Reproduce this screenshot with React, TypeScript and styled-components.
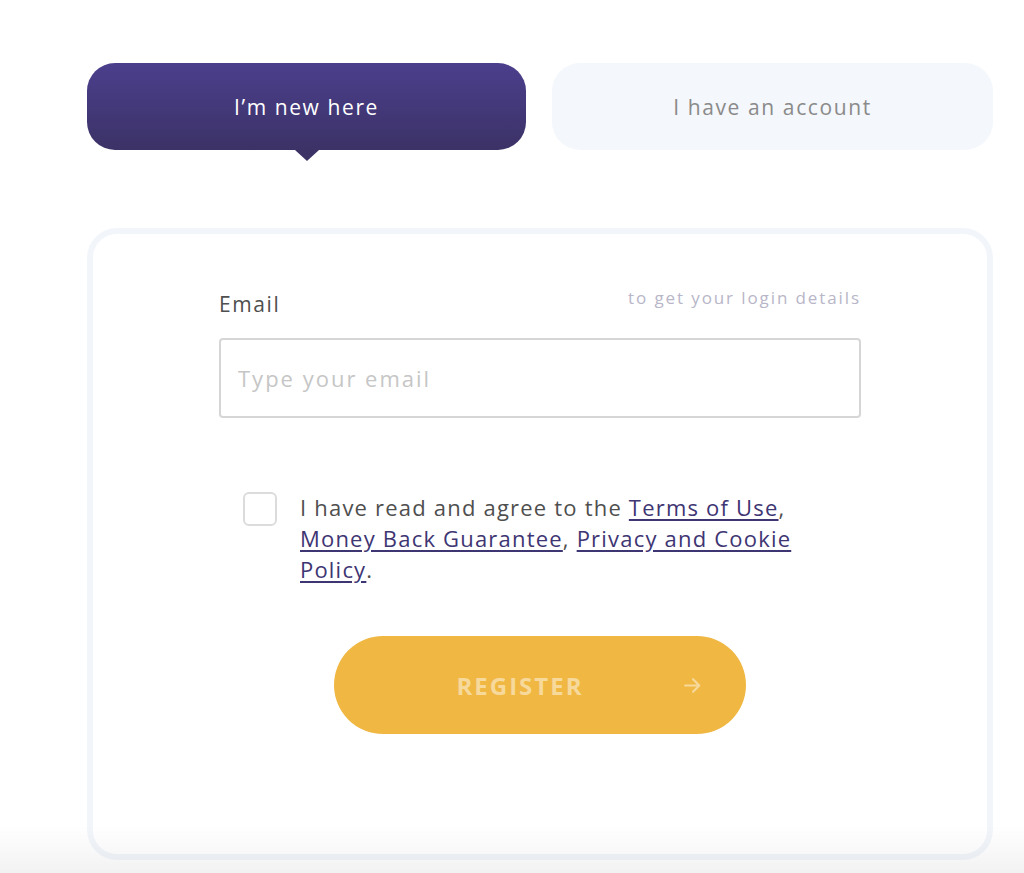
import React, { useState } from "react";
import styled, { createGlobalStyle } from "styled-components";

const GlobalStyle = createGlobalStyle`
  html, body {
    margin: 0;
    padding: 0;
    background: #fff;
  }
  body {
    font-family: "Open Sans", "Noto Sans", sans-serif;
  }
`;

const App: React.FC = () => {
  const [tab, setTab] = useState<"new" | "account">("new");
  const [agree, setAgree] = useState(false);

  return (
    <>
      <GlobalStyle />
      <Page>
        <Tabs>
          <Tab active={tab === "new"} onClick={() => setTab("new")}>
            I’m new here
          </Tab>
          <Tab active={tab === "account"} onClick={() => setTab("account")}>
            I have an account
          </Tab>
        </Tabs>

        <Card>
          <Form>
            <LabelRow>
              <Label>Email</Label>
              <Hint>to get your login details</Hint>
            </LabelRow>
            <Input type="email" placeholder="Type your email" />

            <AgreeRow>
              <Check
                type="checkbox"
                checked={agree}
                onChange={e => setAgree(e.target.checked)}
              />
              <AgreeText>
                I have read and agree to the <Link href="#">Terms of Use</Link>,{" "}
                <Link href="#">Money Back Guarantee</Link>,{" "}
                <Link href="#">Privacy and Cookie Policy</Link>.
              </AgreeText>
            </AgreeRow>

            <Register disabled={!agree}>
              REGISTER
              <Arrow viewBox="0 0 20 20">
                <path
                  d="M3 10h13M10.5 4l6 6-6 6"
                  fill="none"
                  stroke="currentColor"
                  strokeWidth="2"
                  strokeLinecap="round"
                  strokeLinejoin="round"
                />
              </Arrow>
            </Register>
          </Form>
        </Card>
      </Page>
      {/* soft fade over the bottom edge of the viewport */}
      <BottomFade />
    </>
  );
};

const Page = styled.div`
  min-height: 873px;
  box-sizing: border-box;
  padding: 63px 31px 13px 87px;
`;

const BottomFade = styled.div`
  position: fixed;
  left: 0;
  right: 0;
  bottom: 0;
  height: 48px;
  pointer-events: none;
  background: linear-gradient(
    to bottom,
    rgba(0, 0, 0, 0) 0%,
    rgba(0, 0, 0, 0.025) 50%,
    rgba(0, 0, 0, 0.05) 100%
  );
`;

const Tabs = styled.div`
  display: grid;
  grid-template-columns: 439px 441px;
  gap: 26px;
  margin-bottom: 78px;
`;

const Tab = styled.button<{ active: boolean }>`
  position: relative;
  height: 87px;
  border: none;
  border-radius: 28px;
  font-family: "Open Sans", "Noto Sans", sans-serif;
  font-size: 21px;
  letter-spacing: 1.6px;
  cursor: pointer;
  color: ${p => (p.active ? "#ffffff" : "#8a8a8a")};
  background: ${p =>
    p.active
      ? "linear-gradient(to bottom, #4b3f8d 0%, #3c3266 100%)"
      : "#f4f7fb"};

  &::after {
    content: "";
    display: ${p => (p.active ? "block" : "none")};
    position: absolute;
    left: 50%;
    bottom: -11px;
    margin-left: -12px;
    border-left: 12px solid transparent;
    border-right: 12px solid transparent;
    border-top: 11px solid #3c3266;
  }
`;

const Card = styled.div`
  box-sizing: border-box;
  width: 906px;
  height: 632px;
  border: 6px solid #f2f6fb;
  border-radius: 30px;
  background: #fff;
  padding-top: 52px;
`;

const Form = styled.div`
  width: 642px;
  margin: 0 auto;
  display: flex;
  flex-direction: column;
`;

const LabelRow = styled.div`
  display: flex;
  justify-content: space-between;
  align-items: flex-start;
  margin-bottom: 20px;
`;

const Label = styled.label`
  font-size: 21px;
  line-height: 28px;
  padding-top: 4px;
  letter-spacing: 1.6px;
  color: #4f4f4f;
`;

const Hint = styled.span`
  font-size: 17px;
  line-height: 24px;
  letter-spacing: 1.9px;
  color: #b8b6c8;
`;

const Input = styled.input`
  box-sizing: border-box;
  height: 80px;
  width: 100%;
  border: 2px solid #d6d6d6;
  border-radius: 4px;
  padding: 0 17px;
  font-family: "Open Sans", "Noto Sans", sans-serif;
  font-size: 22px;
  letter-spacing: 2px;
  color: #333;
  outline: none;

  &::placeholder {
    color: #c6c6c6;
  }
`;

const AgreeRow = styled.div`
  display: flex;
  align-items: flex-start;
  gap: 23px;
  padding-left: 24px;
  margin-top: 74px;
`;

const Check = styled.input`
  appearance: none;
  flex: none;
  width: 34px;
  height: 34px;
  margin: 0;
  border: 2px solid #dcdcdc;
  border-radius: 6px;
  background: #fff;
  cursor: pointer;

  &:checked {
    background: #3c3266;
    border-color: #3c3266;
  }
`;

const AgreeText = styled.p`
  margin: 0;
  max-width: 505px;
  font-size: 22px;
  line-height: 31px;
  letter-spacing: 1.2px;
  color: #4f4f4f;
`;

const Link = styled.a`
  color: #3e3573;
  text-decoration: underline;
  text-underline-offset: 3px;
`;

const Register = styled.button`
  position: relative;
  align-self: center;
  width: 412px;
  height: 98px;
  margin-top: 51px;
  padding: 0 40px 0 0;
  border: none;
  border-radius: 49px;
  background: #f0b743;
  color: #f6d99b;
  font-family: "Open Sans", "Noto Sans", sans-serif;
  font-size: 24px;
  font-weight: 700;
  letter-spacing: 2px;
  cursor: pointer;
`;

const Arrow = styled.svg`
  position: absolute;
  right: 43px;
  top: 50%;
  width: 21px;
  height: 21px;
  margin-top: -10px;
`;

export default App;
